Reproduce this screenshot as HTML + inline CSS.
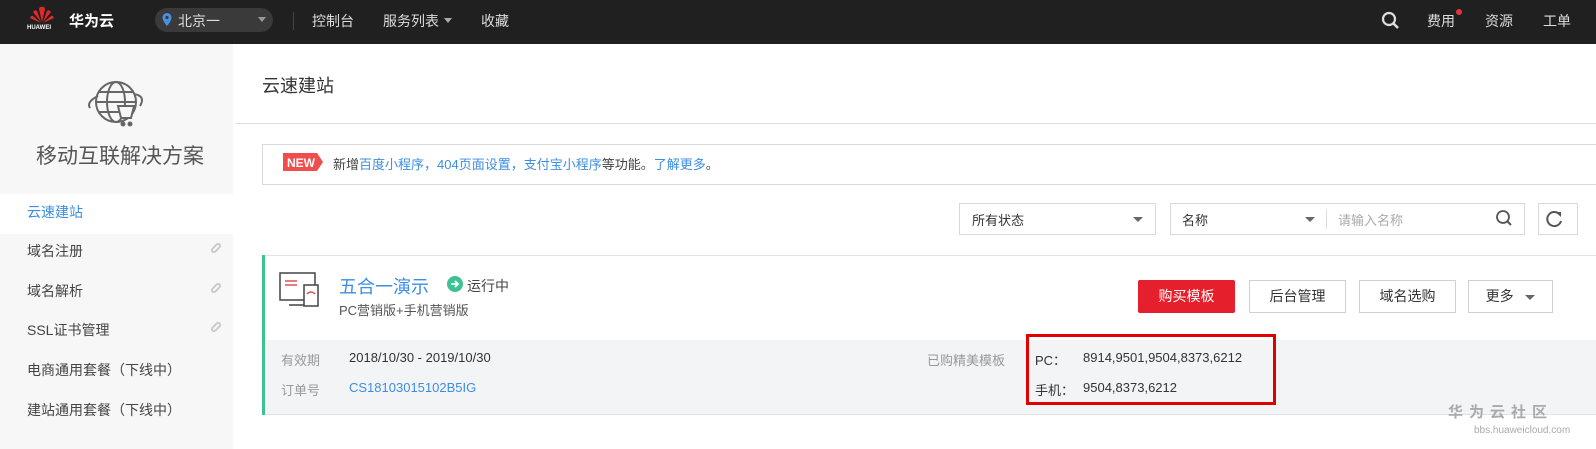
<!DOCTYPE html>
<html><head><meta charset="utf-8"><style>
*{margin:0;padding:0;box-sizing:border-box}
body{width:1596px;height:449px;overflow:hidden;background:#fff;font-family:"Liberation Sans","Noto Sans CJK SC",sans-serif;font-size:13px;color:#333;position:relative}
.a{position:absolute;white-space:nowrap}
.top{left:0;top:0;width:1596px;height:44px;background:#202020}
.tw{color:#ddd;font-size:14px}
.side{left:0;top:44px;width:233px;height:405px;background:#f7f7f7}
.mi{left:27px;font-size:14px;color:#444}
.blue{color:#3d8ee2}
.box{border:1px solid #d9d9d9;background:#fff}
.btn{border:1px solid #d0d0d0;background:#fff;height:33px;top:280px;text-align:center;line-height:31px;font-size:14px;color:#333}
.tri{display:inline-block;width:0;height:0;border-left:5px solid transparent;border-right:5px solid transparent;border-top:5px solid #666}
.link{width:12px;height:6px;border:2px solid #ccc;border-radius:4px;transform:rotate(-45deg)}
</style></head><body>
<div class="a top"></div>
<svg class="a" style="left:28px;top:5px" width="28" height="20" viewBox="0 0 28 20"><g fill="#e02a2a"><path d="M14 17 L11 4 Q12 1 14 2 Z"/><path d="M14 17 L17 4 Q16 1 14 2 Z"/><path d="M13 17 L5 7 Q7 4 9 6 Z"/><path d="M15 17 L23 7 Q21 4 19 6 Z"/><path d="M13 18 L2 13 Q3 10 5 11 Z"/><path d="M15 18 L26 13 Q25 10 23 11 Z"/></g></svg>
<div class="a" style="left:27px;top:25px;font-size:6px;color:#fff;font-weight:bold">HUAWEI</div>
<div class="a" style="left:69px;top:10px;font-size:15px;color:#fff;font-weight:bold">华为云</div>
<div class="a" style="left:155px;top:8px;width:118px;height:24px;border-radius:12px;background:#3a3a3a"></div>
<svg class="a" style="left:162px;top:13px" width="10" height="13"><path d="M5 0a4.5 4.5 0 0 1 4.5 4.5C9.5 8 5 13 5 13S0.5 8 0.5 4.5A4.5 4.5 0 0 1 5 0z" fill="#4a90e2"/><circle cx="5" cy="4.5" r="1.6" fill="#3a3a3a"/></svg>
<div class="a tw" style="left:178px;top:11px">北京一</div>
<div class="a" style="left:258px;top:17px;border-left:4px solid transparent;border-right:4px solid transparent;border-top:5px solid #999"></div>
<div class="a" style="left:293px;top:12px;width:1px;height:18px;background:#444"></div>
<div class="a tw" style="left:312px;top:11px">控制台</div>
<div class="a tw" style="left:383px;top:11px">服务列表</div>
<div class="a" style="left:444px;top:18px;border-left:4px solid transparent;border-right:4px solid transparent;border-top:5px solid #aaa"></div>
<div class="a tw" style="left:481px;top:11px">收藏</div>
<svg class="a" style="left:1381px;top:11px" width="20" height="20"><circle cx="8" cy="8" r="6" stroke="#ddd" stroke-width="2.2" fill="none"/><path d="M12.5 12.5L17 17" stroke="#ddd" stroke-width="2.5"/></svg>
<div class="a tw" style="left:1427px;top:11px">费用</div>
<div class="a" style="left:1456px;top:9px;width:6px;height:6px;border-radius:3px;background:#e8323c"></div>
<div class="a tw" style="left:1485px;top:11px">资源</div>
<div class="a tw" style="left:1543px;top:11px">工单</div>

<div class="a side"></div>
<svg class="a" style="left:84px;top:72px" width="66" height="64" viewBox="0 0 66 64" fill="none" stroke="#666" stroke-width="2"><circle cx="32" cy="30" r="20"/><ellipse cx="32" cy="30" rx="9" ry="20"/><path d="M12 30h40M15 20h34M15 40h20"/><path d="M6 36 Q2 30 14 24 M50 22 Q62 24 56 34" /><path d="M34 34h16l-3 12h-10z" fill="#f7f7f7"/><circle cx="39" cy="52" r="1.5" fill="#666"/><circle cx="46" cy="52" r="1.5" fill="#666"/></svg>
<div class="a" style="left:36px;top:140px;font-size:21px;color:#555">移动互联解决方案</div>
<div class="a" style="left:0;top:194px;width:233px;height:40px;background:#fff"></div>
<div class="a mi blue" style="top:202px">云速建站</div>
<div class="a mi" style="top:241px">域名注册</div>
<div class="a mi" style="top:281px">域名解析</div>
<div class="a mi" style="top:320px">SSL证书管理</div>
<div class="a mi" style="top:360px">电商通用套餐（下线中）</div>
<div class="a mi" style="top:400px">建站通用套餐（下线中）</div>
<div class="a link" style="left:210px;top:245px"></div>
<div class="a link" style="left:210px;top:285px"></div>
<div class="a link" style="left:210px;top:324px"></div>

<div class="a" style="left:262px;top:72px;font-size:18px;color:#333">云速建站</div>
<div class="a" style="left:236px;top:123px;width:1360px;height:1px;background:#ddd"></div>
<div class="a box" style="left:262px;top:144px;width:1340px;height:41px"></div>
<svg class="a" style="left:283px;top:153px" width="42" height="18"><path d="M0 0h34l6 9-6 9H0z" fill="#f04d4d"/><text x="4" y="14" font-family="Liberation Sans" font-weight="bold" font-size="12" fill="#fff">NEW</text></svg>
<div class="a" style="left:333px;top:154px;font-size:13px;color:#444">新增<span class="blue">百度小程序，404页面设置，支付宝小程序</span>等功能。<span class="blue">了解更多</span>。</div>

<div class="a box" style="left:959px;top:203px;width:197px;height:32px"></div>
<div class="a" style="left:972px;top:210px;font-size:13px">所有状态</div>
<div class="a tri" style="left:1133px;top:217px"></div>
<div class="a box" style="left:1170px;top:203px;width:355px;height:32px"></div>
<div class="a" style="left:1182px;top:210px;font-size:13px">名称</div>
<div class="a tri" style="left:1305px;top:217px"></div>
<div class="a" style="left:1326px;top:209px;width:1px;height:20px;background:#ddd"></div>
<div class="a" style="left:1338px;top:210px;font-size:13px;color:#aaa">请输入名称</div>
<svg class="a" style="left:1495px;top:209px" width="20" height="20"><circle cx="8" cy="8" r="6" stroke="#555" stroke-width="1.8" fill="none"/><path d="M12.5 12.5L16 16" stroke="#555" stroke-width="2"/></svg>
<div class="a box" style="left:1538px;top:203px;width:40px;height:32px"></div>
<svg class="a" style="left:1545px;top:209px" width="20" height="20"><path d="M15 6A7 7 0 1 0 16 12" stroke="#555" stroke-width="2" fill="none"/><path d="M11 3l5 0 0 5z" fill="#555"/></svg>

<div class="a" style="left:262px;top:255px;width:1334px;height:160px;border-top:1px solid #e3e3e3;border-bottom:1px solid #e3e3e3"></div>
<div class="a" style="left:266px;top:340px;width:1330px;height:74px;background:#f3f4f6"></div>
<div class="a" style="left:262px;top:255px;width:3px;height:160px;background:#3cc392"></div>
<svg class="a" style="left:279px;top:272px" width="42" height="36" fill="none" stroke="#444" stroke-width="1.5"><rect x="1" y="1" width="35" height="27"/><path d="M10 33h20"/><path d="M6 9h12M6 13h12" stroke="#e05050"/><rect x="25" y="13" width="14" height="21" fill="#fff"/><path d="M28 22q4-4 8 0" stroke="#e05050"/></svg>
<div class="a" style="left:339px;top:273px;font-size:18px;color:#3d8ee2">五合一演示</div>
<svg class="a" style="left:447px;top:276px" width="16" height="16"><circle cx="8" cy="8" r="8" fill="#3cc392"/><path d="M4 8h7M8 5l3 3-3 3" stroke="#fff" stroke-width="1.8" fill="none"/></svg>
<div class="a" style="left:467px;top:276px;font-size:14px;color:#444">运行中</div>
<div class="a" style="left:339px;top:300px;font-size:13px;color:#555">PC营销版+手机营销版</div>
<div class="a btn" style="left:1138px;width:97px;background:#e5202c;border-color:#e5202c;color:#fff;border-radius:2px">购买模板</div>
<div class="a btn" style="left:1249px;width:97px">后台管理</div>
<div class="a btn" style="left:1359px;width:97px">域名选购</div>
<div class="a btn" style="left:1468px;width:85px">更多&nbsp;&nbsp;&nbsp;<span class="tri" style="vertical-align:middle"></span></div>

<div class="a" style="left:281px;top:350px;color:#999">有效期</div>
<div class="a" style="left:349px;top:350px;color:#333">2018/10/30 - 2019/10/30</div>
<div class="a" style="left:281px;top:380px;color:#999">订单号</div>
<div class="a blue" style="left:349px;top:380px">CS18103015102B5IG</div>
<div class="a" style="left:927px;top:350px;color:#999">已购精美模板</div>
<div class="a" style="left:1026px;top:334px;width:250px;height:71px;border:3px solid #e00000"></div>
<div class="a" style="left:1035px;top:350px">PC：</div>
<div class="a" style="left:1083px;top:350px">8914,9501,9504,8373,6212</div>
<div class="a" style="left:1035px;top:380px">手机：</div>
<div class="a" style="left:1083px;top:380px">9504,8373,6212</div>

<div class="a" style="left:1448px;top:401px;font-size:15px;color:#aaa;letter-spacing:6px;font-weight:bold">华为云社区</div>
<div class="a" style="left:1474px;top:425px;font-size:10px;color:#aaa">bbs.huaweicloud.com</div>
</body></html>
